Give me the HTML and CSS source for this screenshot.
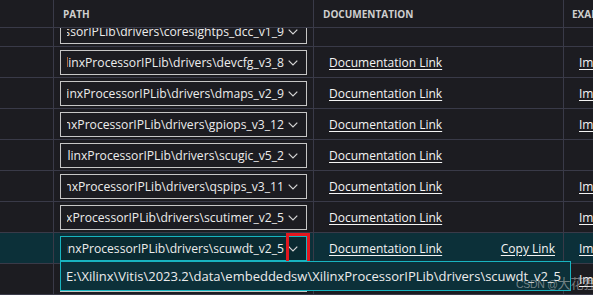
FILE: index.html
```html
<!DOCTYPE html>
<html>
<head>
<meta charset="utf-8">
<link rel="stylesheet" href="styles.css">
</head>
<body>
<div class="table">
  <div class="row head">
    <div class="cell c1"></div>
    <div class="cell c2"><span class="th">PATH</span></div>
    <div class="cell c3"><span class="th">DOCUMENTATION</span></div>
    <div class="cell c4"><span class="th">EXAMPLES</span></div>
  </div>
  <div class="body">
    <div class="scroll">
      <div class="row">
        <div class="cell c1"></div>
        <div class="cell c2"><div class="sel"><div class="sel-text"><span>E:\Xilinx\Vitis\2023.2\data\embeddedsw\XilinxProcessorIPLib\drivers\coresightps_dcc_v1_9</span></div><svg class="chev" viewBox="0 0 10 6" width="10" height="6"><path d="M0.7 0.7 L5 5 L9.3 0.7"/></svg></div></div>
        <div class="cell c3"></div>
        <div class="cell c4"></div>
      </div>
      <div class="row">
        <div class="cell c1"></div>
        <div class="cell c2"><div class="sel"><div class="sel-text"><span>E:\Xilinx\Vitis\2023.2\data\embeddedsw\XilinxProcessorIPLib\drivers\devcfg_v3_8</span></div><svg class="chev" viewBox="0 0 10 6" width="10" height="6"><path d="M0.7 0.7 L5 5 L9.3 0.7"/></svg></div></div>
        <div class="cell c3"><a class="link">Documentation Link</a></div>
        <div class="cell c4"><a class="link">Import Examples</a></div>
      </div>
      <div class="row">
        <div class="cell c1"></div>
        <div class="cell c2"><div class="sel"><div class="sel-text"><span>E:\Xilinx\Vitis\2023.2\data\embeddedsw\XilinxProcessorIPLib\drivers\dmaps_v2_9</span></div><svg class="chev" viewBox="0 0 10 6" width="10" height="6"><path d="M0.7 0.7 L5 5 L9.3 0.7"/></svg></div></div>
        <div class="cell c3"><a class="link">Documentation Link</a></div>
        <div class="cell c4"><a class="link">Import Examples</a></div>
      </div>
      <div class="row">
        <div class="cell c1"></div>
        <div class="cell c2"><div class="sel"><div class="sel-text"><span>E:\Xilinx\Vitis\2023.2\data\embeddedsw\XilinxProcessorIPLib\drivers\gpiops_v3_12</span></div><svg class="chev" viewBox="0 0 10 6" width="10" height="6"><path d="M0.7 0.7 L5 5 L9.3 0.7"/></svg></div></div>
        <div class="cell c3"><a class="link">Documentation Link</a></div>
        <div class="cell c4"><a class="link">Import Examples</a></div>
      </div>
      <div class="row">
        <div class="cell c1"></div>
        <div class="cell c2"><div class="sel"><div class="sel-text"><span>E:\Xilinx\Vitis\2023.2\data\embeddedsw\XilinxProcessorIPLib\drivers\scugic_v5_2</span></div><svg class="chev" viewBox="0 0 10 6" width="10" height="6"><path d="M0.7 0.7 L5 5 L9.3 0.7"/></svg></div></div>
        <div class="cell c3"><a class="link">Documentation Link</a></div>
        <div class="cell c4"></div>
      </div>
      <div class="row">
        <div class="cell c1"></div>
        <div class="cell c2"><div class="sel"><div class="sel-text"><span>E:\Xilinx\Vitis\2023.2\data\embeddedsw\XilinxProcessorIPLib\drivers\qspips_v3_11</span></div><svg class="chev" viewBox="0 0 10 6" width="10" height="6"><path d="M0.7 0.7 L5 5 L9.3 0.7"/></svg></div></div>
        <div class="cell c3"><a class="link">Documentation Link</a></div>
        <div class="cell c4"><a class="link">Import Examples</a></div>
      </div>
      <div class="row">
        <div class="cell c1"></div>
        <div class="cell c2"><div class="sel"><div class="sel-text"><span>E:\Xilinx\Vitis\2023.2\data\embeddedsw\XilinxProcessorIPLib\drivers\scutimer_v2_5</span></div><svg class="chev" viewBox="0 0 10 6" width="10" height="6"><path d="M0.7 0.7 L5 5 L9.3 0.7"/></svg></div></div>
        <div class="cell c3"><a class="link">Documentation Link</a></div>
        <div class="cell c4"><a class="link">Import Examples</a></div>
      </div>
      <div class="row active">
        <div class="cell c1"></div>
        <div class="cell c2"><div class="sel open"><div class="sel-text"><span>E:\Xilinx\Vitis\2023.2\data\embeddedsw\XilinxProcessorIPLib\drivers\scuwdt_v2_5</span></div><svg class="chev" viewBox="0 0 10 6" width="10" height="6"><path d="M0.7 0.7 L5 5 L9.3 0.7"/></svg>
          <div class="mark"></div>
          <div class="dropdown">E:\Xilinx\Vitis\2023.2\data\embeddedsw\XilinxProcessorIPLib\drivers\scuwdt_v2_5</div>
        </div></div>
        <div class="cell c3 split"><a class="link">Documentation Link</a><a class="link">Copy Link</a></div>
        <div class="cell c4"><a class="link">Import Examples</a></div>
      </div>
      <div class="row">
        <div class="cell c1"></div>
        <div class="cell c2"><div class="sel"><div class="sel-text"><span>E:\Xilinx\Vitis\2023.2\data\embeddedsw\XilinxProcessorIPLib\drivers\ttcps_v3_18</span></div><svg class="chev" viewBox="0 0 10 6" width="10" height="6"><path d="M0.7 0.7 L5 5 L9.3 0.7"/></svg></div></div>
        <div class="cell c3"><a class="link">Documentation Link</a></div>
        <div class="cell c4"><a class="link">Import Examples</a></div>
      </div>
    </div>
  </div>
</div>
<div class="watermark"><span class="wm-latin">CSDN @</span>大花狸</div>
</body>
</html>
```
FILE: styles.css
```css
html, body {
  margin: 0;
  padding: 0;
  background: #1c1c21;
  width: 593px;
  height: 295px;
  overflow: hidden;
}
body {
  font-family: "Open Sans", "Noto Sans", sans-serif;
  font-size: 12px;
  color: #e8e8e8;
  position: relative;
}
.table {
  width: 593px;
}
.row {
  display: grid;
  grid-template-columns: 54px 260px 250px 1fr;
  height: 31px;
  border-bottom: 1px solid #393a48;
  box-sizing: border-box;
}
.row.head {
  height: 28px;
}
.cell {
  border-right: 1px solid #393a48;
  display: flex;
  align-items: center;
  min-width: 0;
  overflow: visible;
  white-space: nowrap;
}
.c4 {
  border-right: none;
  overflow: hidden;
}
.head .cell {
  padding-left: 9px;
}
.head .c4 {
  padding-left: 8px;
}
.th {
  font-weight: 700;
  font-size: 10px;
  color: #cfcfcf;
}
.body {
  height: 267px;
  overflow: hidden;
}
.scroll {
  margin-top: -12px;
}
.row.active {
  background: #0c3039;
}
.c2 {
  padding: 0 6px;
  padding-top: 1px;
}
.sel {
  position: relative;
  flex: 1;
  height: 25px;
  box-sizing: border-box;
  border: 1px solid #c6c6c6;
  display: flex;
  align-items: center;
  padding: 0 8px 0 6px;
  min-width: 0;
}
.sel.open {
  border-color: #18b4c0;
  background: #0a2a31;
}
.sel-text {
  flex: 1;
  display: flex;
  justify-content: flex-end;
  overflow: hidden;
  min-width: 0;
  color: #ececec;
  font-size: 12.15px;
}
.sel-text span {
  flex-shrink: 0;
}
.chev {
  flex-shrink: 0;
  margin-left: 4px;
  fill: none;
  stroke: #d6d6d6;
  stroke-width: 1.2;
}
.c3, .c4 {
  padding-left: 15px;
}
.split {
  justify-content: space-between;
  padding-right: 8px;
}
.link {
  color: #f4f4f4;
  text-decoration: underline;
  text-underline-offset: 2px;
}
.mark {
  position: absolute;
  left: 225px;
  top: -4px;
  width: 24px;
  height: 32px;
  box-sizing: border-box;
  border: 3px solid #e3171f;
}
.dropdown {
  position: absolute;
  left: -1px;
  top: 24px;
  width: 511px;
  height: 30px;
  box-sizing: border-box;
  border: 1px solid #18b4c0;
  background: #0c3039;
  padding-left: 5px;
  display: flex;
  align-items: center;
  font-size: 13px;
  color: #ececec;
  z-index: 2;
}
.watermark {
  position: absolute;
  left: 516px;
  top: 276px;
  font-family: "Noto Sans CJK SC", sans-serif;
  font-size: 13px;
  line-height: 14px;
  color: rgba(200, 200, 200, 0.55);
  white-space: nowrap;
  z-index: 3;
}
.wm-latin {
  font-family: "Liberation Sans", sans-serif;
  font-size: 10.5px;
  letter-spacing: -0.3px;
}
```
